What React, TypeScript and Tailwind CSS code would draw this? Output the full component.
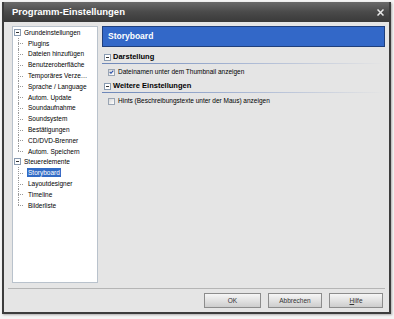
import React from 'react';

const treeGroups = [
  {
    label: 'Grundeinstellungen',
    children: [
      'Plugins',
      'Dateien hinzufügen',
      'Benutzeroberfläche',
      'Temporäres Verze…',
      'Sprache / Language',
      'Autom. Update',
      'Soundaufnahme',
      'Soundsystem',
      'Bestätigungen',
      'CD/DVD-Brenner',
      'Autom. Speichern',
    ],
  },
  {
    label: 'Steuerelemente',
    children: ['Storyboard', 'Layoutdesigner', 'Timeline', 'Bilderliste'],
  },
];

const MinusBox = () => (
  <span className="flex h-[7px] w-[7px] shrink-0 items-center justify-center border border-[#8a9bb0] bg-white">
    <span className="h-px w-[3px] bg-[#333]" />
  </span>
);

const Checkbox = ({ checked }: { checked?: boolean }) => (
  <span className="flex h-[7px] w-[7px] shrink-0 items-center justify-center border border-[#9aa5b3] bg-gradient-to-br from-[#d8d8d8] to-white">
    {checked && (
      <svg width="6" height="6" viewBox="0 0 7 7">
        <path d="M1 3.5 L2.8 5.3 L6 1.5" stroke="#2a4fa8" strokeWidth="1.5" fill="none" />
      </svg>
    )}
  </span>
);

const Section = ({ title, children }: { title: string; children: React.ReactNode }) => (
  <div className="flex flex-col">
    <div className="flex h-[12px] items-center gap-[2px] pl-[2px]">
      <MinusBox />
      <span className="text-[7.5px] font-bold text-black">{title}</span>
    </div>
    <div className="h-px bg-gradient-to-r from-[#6d87b8] via-[#aab8d4] to-transparent" />
    <div className="flex h-[16px] items-center pl-[6px]">{children}</div>
  </div>
);

const Button = ({ children }: { children: React.ReactNode }) => (
  <button className="flex h-[15px] w-full items-center justify-center border border-[#8c8c8c] bg-gradient-to-b from-[#f6f6f6] via-[#e2e2e2] to-[#cdcdcd] text-[6.5px] text-[#333]">
    {children}
  </button>
);

export default function App() {
  return (
    <div
      className="h-[319px] w-[394px] bg-[#f4f4f4] pt-[2px] pl-[2px]"
      style={{ fontFamily: '"Liberation Sans", Arial, sans-serif' }}
    >
      <div className="flex h-[312px] w-[389px] flex-col border-[2px] border-t-0 border-[#3c3c3c] bg-[#e5e5e5] shadow-[1px_1px_2px_rgba(0,0,0,0.3)]">
        {/* title bar */}
        <div className="flex h-[20px] items-center justify-between bg-gradient-to-b from-[#6a6a6a] via-[#4a4a4a] to-[#3a3a3a] pl-[8px] pr-[5px]">
          <span className="text-[9.5px] font-bold text-white">Programm-Einstellungen</span>
          <svg width="7" height="7" viewBox="0 0 7 7">
            <path d="M0.5 0.5 L6.5 6.5 M6.5 0.5 L0.5 6.5" stroke="#e8e8e8" strokeWidth="1.5" />
          </svg>
        </div>

        <div className="flex flex-1 gap-[4px] pl-[8px] pr-[4px] pt-[4px]">
          {/* tree */}
          <div className="h-[257px] w-[86px] border border-[#b9c2cc] bg-white pl-[1px]">
            {treeGroups.map((g) => (
              <div key={g.label} className="flex flex-col">
                <div className="flex h-[10.8px] items-center gap-[3px]">
                  <MinusBox />
                  <span className="text-[6.5px] text-black">{g.label}</span>
                </div>
                <div className="flex flex-col">
                  {g.children.map((c, i) => (
                    <div key={c} className="flex h-[10.8px] items-center">
                      <div className="relative h-full w-[13px] shrink-0">
                        <div
                          className={`absolute left-[4px] top-0 w-0 border-l border-dotted border-[#999] ${
                            i === g.children.length - 1 ? 'h-1/2' : 'h-full'
                          }`}
                        />
                        <div className="absolute left-[4px] top-1/2 w-[5px] border-t border-dotted border-[#999]" />
                      </div>
                      <span
                        className={`whitespace-nowrap px-[1px] text-[6.5px] leading-[9px] ${
                          c === 'Storyboard' ? 'bg-[#316ac5] text-white' : 'text-black'
                        }`}
                      >
                        {c}
                      </span>
                    </div>
                  ))}
                </div>
              </div>
            ))}
          </div>

          {/* right panel */}
          <div className="flex flex-1 flex-col">
            <div className="mb-[4px] flex h-[21px] items-center border border-[#1f3f7c] bg-[#3368c8] pl-[5px]">
              <span className="text-[8.5px] font-bold text-white">Storyboard</span>
            </div>
            <Section title="Darstellung">
              <div className="flex items-center gap-[3px]">
                <Checkbox checked />
                <span className="text-[6.5px] text-black">Dateinamen unter dem Thumbnail anzeigen</span>
              </div>
            </Section>
            <Section title="Weitere Einstellungen">
              <div className="flex items-center gap-[3px]">
                <Checkbox />
                <span className="text-[6.5px] text-black">Hints (Beschreibungstexte unter der Maus) anzeigen</span>
              </div>
            </Section>
          </div>
        </div>

        {/* footer */}
        <div className="mx-[4px] h-px bg-[#b5b5b5]" />
        <div className="flex h-[23px] items-start justify-end gap-[7px] pr-[6px] pt-[4px]">
          <div className="w-[57px]"><Button>OK</Button></div>
          <div className="w-[54px]"><Button>Abbrechen</Button></div>
          <div className="w-[54px]"><Button><span><u>H</u>ilfe</span></Button></div>
        </div>
      </div>
    </div>
  );
}
